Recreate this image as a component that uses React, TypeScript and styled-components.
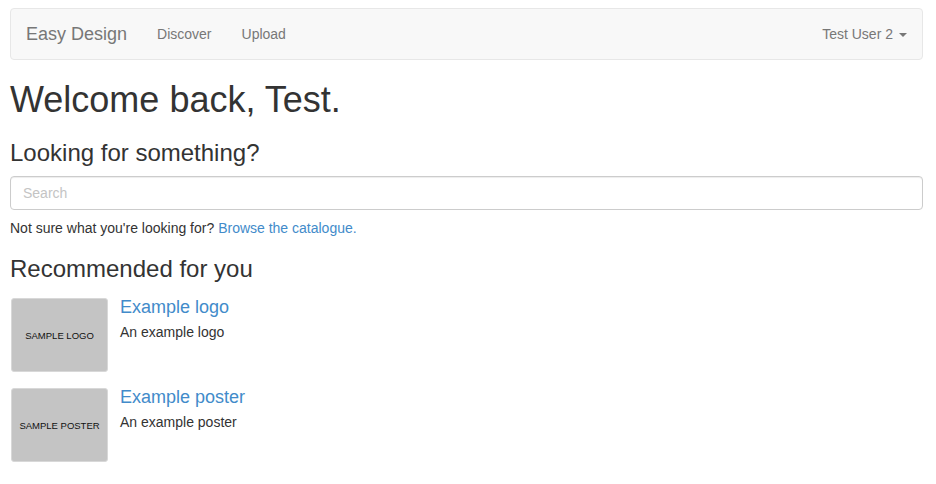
import React from "react";
import styled, { createGlobalStyle } from "styled-components";

const Global = createGlobalStyle`
  * { box-sizing: border-box; }
  html, body { margin: 0; padding: 0; background: #fff; }
  body {
    font-family: "Liberation Sans", Arial, sans-serif;
    font-size: 14px;
    line-height: 1.42857;
    color: #333;
  }
`;

const Page = styled.div`
  padding: 8px 13px 0 10px;
`;

const Navbar = styled.nav`
  display: flex;
  align-items: center;
  min-height: 52px;
  height: 52px;
  background: #f8f8f8;
  border: 1px solid #e7e7e7;
  border-radius: 4px;
  margin-bottom: 20px;
`;

const Brand = styled.a`
  font-size: 18px;
  line-height: 20px;
  color: #777;
  padding: 15px;
  text-decoration: none;
`;

const NavLink = styled.a<{ $right?: boolean }>`
  color: #777;
  font-size: 14px;
  line-height: 20px;
  padding: 15px;
  text-decoration: none;
  margin-left: ${(p) => (p.$right ? "auto" : "0")};
  display: flex;
  align-items: center;
  gap: 6px;
`;

const Caret = styled.span`
  width: 0;
  height: 0;
  border-top: 4px solid #777;
  border-left: 4px solid transparent;
  border-right: 4px solid transparent;
  margin-top: 1px;
`;

const H1 = styled.h1`
  font-size: 36px;
  font-weight: 500;
  line-height: 1.1;
  margin: 20px 0 10px;
`;

const H3 = styled.h3<{ $tight?: boolean }>`
  font-size: 24px;
  font-weight: 500;
  line-height: 1.1;
  margin: ${(p) => (p.$tight ? "17px" : "20px")} 0 10px;
`;

const Input = styled.input`
  display: block;
  width: 100%;
  height: 34px;
  padding: 6px 12px;
  font-family: inherit;
  font-size: 14px;
  color: #555;
  border: 1px solid #ccc;
  border-radius: 4px;
  box-shadow: inset 0 1px 1px rgba(0, 0, 0, 0.075);
  outline: none;
  &::placeholder { color: #c4c4c4; }
`;

const Hint = styled.p`
  margin: 9px 0 0;
`;

const Link = styled.a`
  color: #428bca;
  text-decoration: none;
`;

const Media = styled.div`
  display: flex;
  margin-top: 16px;
`;

const Thumb = styled.div`
  width: 97px;
  height: 74px;
  flex: none;
  background: #c4c4c4;
  border: 1px solid #d8d8d8;
  border-radius: 3px;
  display: flex;
  align-items: center;
  justify-content: center;
  font-size: 9.5px;
  color: #111;
  margin: 0 12px 0 1px;
`;

const MediaBody = styled.div`
  padding-left: 0;
`;

const H4 = styled.h4`
  font-size: 18px;
  font-weight: 500;
  line-height: 1.1;
  margin: 0 0 5px;
  color: #428bca;
`;

const Desc = styled.p`
  margin: 0;
`;

const items = [
  { thumb: "SAMPLE LOGO", title: "Example logo", desc: "An example logo" },
  { thumb: "SAMPLE POSTER", title: "Example poster", desc: "An example poster" },
];

export default function App() {
  return (
    <>
      <Global />
      <Page>
        <Navbar>
          <Brand href="#">Easy Design</Brand>
          <NavLink href="#">Discover</NavLink>
          <NavLink href="#">Upload</NavLink>
          <NavLink href="#" $right>
            Test User 2 <Caret />
          </NavLink>
        </Navbar>
        <H1>Welcome back, Test.</H1>
        <H3>Looking for something?</H3>
        <Input placeholder="Search" />
        <Hint>
          Not sure what you're looking for? <Link href="#">Browse the catalogue.</Link>
        </Hint>
        <H3 $tight>Recommended for you</H3>
        {items.map((it) => (
          <Media key={it.title}>
            <Thumb>{it.thumb}</Thumb>
            <MediaBody>
              <H4>{it.title}</H4>
              <Desc>{it.desc}</Desc>
            </MediaBody>
          </Media>
        ))}
      </Page>
    </>
  );
}
